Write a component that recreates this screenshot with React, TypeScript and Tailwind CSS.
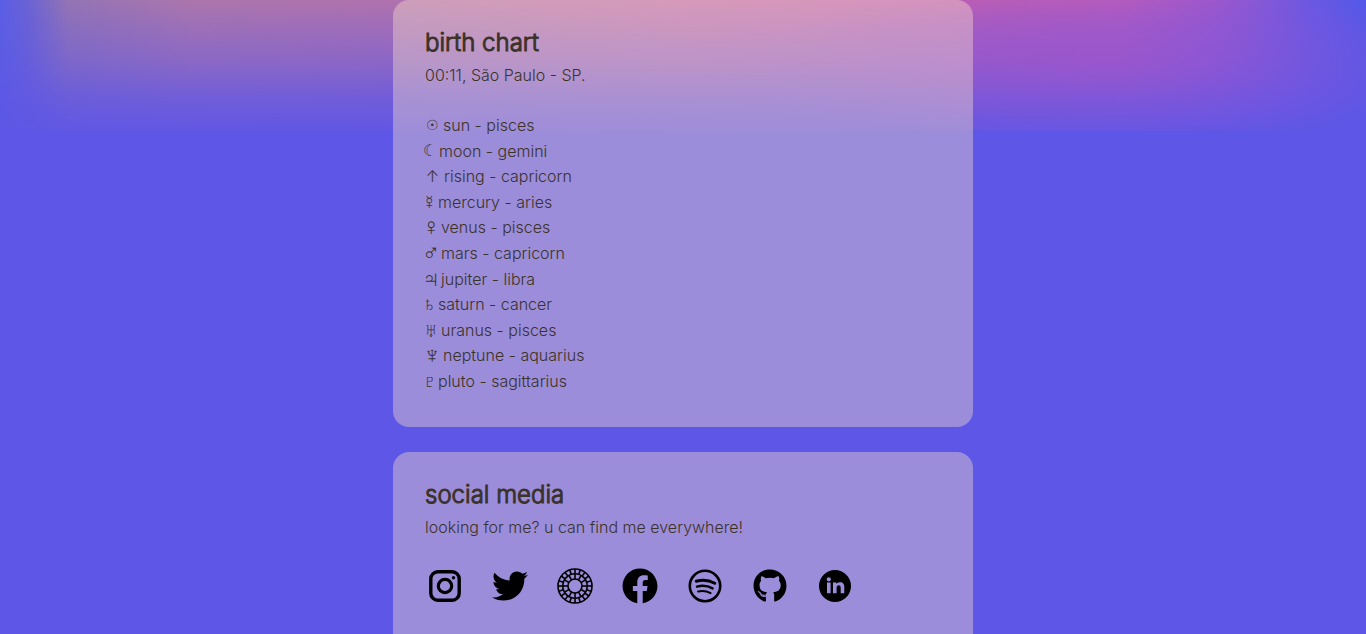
import type { ReactNode } from "react";
import { FaFacebook, FaGithub, FaTwitter } from "react-icons/fa";

type Placement = { symbol: string; label: string; box: string; size: string };

const placements: Placement[] = [
  { symbol: "☉", label: "sun - pisces", box: "w-[14px]", size: "text-sm" },
  { symbol: "☾", label: "moon - gemini", box: "w-[10px]", size: "text-base" },
  { symbol: "↑", label: "rising - capricorn", box: "w-[15px]", size: "font-[Inter] font-light" },
  { symbol: "☿", label: "mercury - aries", box: "w-[9px]", size: "text-xl" },
  { symbol: "♀", label: "venus - pisces", box: "w-[12px]", size: "text-2xl" },
  { symbol: "♂", label: "mars - capricorn", box: "w-[12px]", size: "text-2xl" },
  { symbol: "♃", label: "jupiter - libra", box: "w-[12px]", size: "text-2xl" },
  { symbol: "♄", label: "saturn - cancer", box: "w-[9px]", size: "text-xl" },
  { symbol: "♅", label: "uranus - pisces", box: "w-[12px]", size: "text-xl" },
  { symbol: "♆", label: "neptune - aquarius", box: "w-[14px]", size: "text-2xl" },
  { symbol: "♇", label: "pluto - sagittarius", box: "w-[9px]", size: "text-xl" },
];

function InstagramIcon() {
  return (
    <svg viewBox="0 0 40 40" className="size-10" fill="none" stroke="currentColor" aria-hidden="true">
      <rect x="5.8" y="5.8" width="28.4" height="28.4" rx="7" strokeWidth="3.4" />
      <circle cx="20" cy="20" r="6.7" strokeWidth="3.2" />
      <circle cx="28.5" cy="11.8" r="1.7" fill="currentColor" stroke="none" />
    </svg>
  );
}

function VscoIcon() {
  const spokes = (count: number, from: number, to: number) =>
    Array.from({ length: count }, (_, i) => {
      const a = (i / count) * Math.PI * 2;
      return (
        <line
          key={`${from}-${i}`}
          x1={20 + Math.sin(a) * from}
          y1={20 - Math.cos(a) * from}
          x2={20 + Math.sin(a) * to}
          y2={20 - Math.cos(a) * to}
        />
      );
    });
  return (
    <svg viewBox="0 0 40 40" className="size-10" fill="none" stroke="currentColor" strokeWidth="1.6" aria-hidden="true">
      <circle cx="20" cy="20" r="17" />
      <circle cx="20" cy="20" r="12.2" />
      <circle cx="20" cy="20" r="7" />
      {spokes(20, 12.2, 17)}
      {spokes(12, 7, 12.2)}
    </svg>
  );
}

function SpotifyIcon() {
  return (
    <svg viewBox="0 0 40 40" className="size-10" fill="none" stroke="currentColor" strokeLinecap="round" aria-hidden="true">
      <circle cx="20" cy="20" r="15.2" strokeWidth="2.6" />
      <path d="M11.2 15.2c6-1.6 13-1 18.6 2" strokeWidth="3" />
      <path d="M12 20.6c5.4-1.4 11-.8 15.6 1.8" strokeWidth="2.4" />
      <path d="M13 25.4c4.4-1 8.8-.5 12.6 1.7" strokeWidth="2" />
    </svg>
  );
}

function LinkedinIcon() {
  return (
    <svg viewBox="0 0 40 40" className="size-10" fill="currentColor" aria-hidden="true">
      <path
        fillRule="evenodd"
        d="M20 4a16 16 0 1 0 0 32a16 16 0 1 0 0-32ZM12 16.6h3.6v10.6H12ZM13.8 11.2a2.1 2.1 0 1 1 0 4.2a2.1 2.1 0 1 1 0-4.2ZM18 16.6h3.4v1.5c.7-1.100 1.900-1.800 3.500-1.800c3.300 0 4.400 2 4.400 5v5.900h-3.600v-5.300c0-1.500-.4-2.700-1.900-2.700s-2.200 1.100-2.200 2.600v5.400H18Z"
      />
    </svg>
  );
}

const links: { name: string; href: string; icon: ReactNode }[] = [
  { name: "Instagram", href: "#instagram", icon: <InstagramIcon /> },
  { name: "Twitter", href: "#twitter", icon: <FaTwitter className="size-9" /> },
  { name: "VSCO", href: "#vsco", icon: <VscoIcon /> },
  { name: "Facebook", href: "#facebook", icon: <FaFacebook className="size-9" /> },
  { name: "Spotify", href: "#spotify", icon: <SpotifyIcon /> },
  { name: "GitHub", href: "#github", icon: <FaGithub className="size-[34px]" /> },
  { name: "LinkedIn", href: "#linkedin", icon: <LinkedinIcon /> },
];

const card = "bg-[rgba(251,226,202,0.4)] px-8";
const heading = "text-2xl leading-[38px] font-light [-webkit-text-stroke:1px] text-[#3b3229]";

export default function App() {
  return (
    <div className="min-h-screen bg-[#5e56e6] bg-[radial-gradient(ellipse_26%_62%_at_81%_48%,rgba(160,84,205,0.55)_0%,rgba(150,84,210,0.3)_50%,rgba(94,86,230,0)_100%),linear-gradient(to_bottom,rgba(94,86,230,0)_0%,rgba(94,86,230,0.2)_20%,rgba(94,86,230,0.42)_45%,rgba(94,86,230,0.76)_75%,rgba(94,86,230,0.96)_100%),linear-gradient(to_right,#5a5ee6_0%,#6a62d4_2%,#9474b4_5%,#ac76ac_14%,#b072ae_29%,#c06aae_50%,#bc5eb4_72%,#b85cba_82%,#9c58cc_89%,#6a58e2_96%,#5458e8_100%)] bg-[length:100%_131px] bg-no-repeat font-[Inter,sans-serif] text-base font-light text-[#3b3229]">
      <main className="mx-auto flex min-h-screen w-full max-w-[580px] flex-col gap-[25px]">
        <section className={`${card} rounded-2xl pt-6 pb-8`}>
          <h2 className={heading}>birth chart</h2>
          <p className="leading-[26px]">00:11, São Paulo - SP.</p>
          <ul className="mt-[25px] leading-[1.6]">
            {placements.map(({ symbol, label, box, size }) => (
              <li key={label} className="flex gap-1">
                <span className={`${box} ${size} flex h-6 items-center justify-center font-['DejaVu_Sans_Light','DejaVu_Sans',sans-serif] leading-none font-extralight`}>
                  {symbol}
                </span>
                <span>{label}</span>
              </li>
            ))}
          </ul>
        </section>
        <section className={`${card} grow rounded-t-2xl pt-6 pb-7`}>
          <h2 className={heading}>social media</h2>
          <p className="leading-[26px]">looking for me? u can find me everywhere!</p>
          <nav aria-label="social media" className="mt-[26px] flex flex-wrap gap-[25px] text-black">
            {links.map(({ name, href, icon }) => (
              <a key={name} href={href} aria-label={name} className="flex size-10 items-center justify-center">
                {icon}
              </a>
            ))}
          </nav>
        </section>
      </main>
    </div>
  );
}
